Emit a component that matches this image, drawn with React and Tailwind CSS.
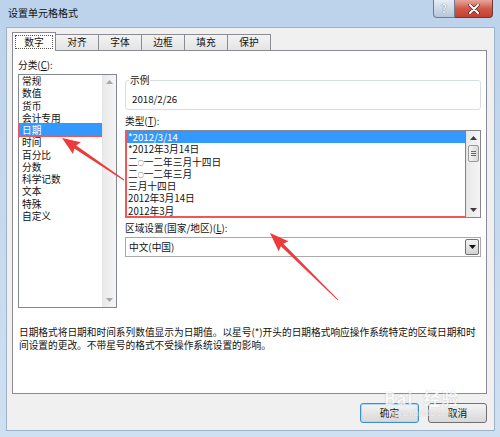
import React from 'react';

const tabs = ['数字', '对齐', '字体', '边框', '填充', '保护'];
const categories = ['常规', '数值', '货币', '会计专用', '日期', '时间', '百分比', '分数', '科学记数', '文本', '特殊', '自定义'];
const types = ['*2012/3/14', '*2012年3月14日', '二○一二年三月十四日', '二○一二年三月', '三月十四日', '2012年3月14日', '2012年3月'];

// the ○ in Excel's list is drawn small, so shrink it
const renderType = (t) =>
  t.split('○').flatMap((part, i) =>
    i === 0
      ? [part]
      : [
          <span key={i} className="inline-block w-[6px] text-center align-[1px] text-[6px]">
            ○
          </span>,
          part,
        ]
  );

// small triangle used on scrollbar and combo buttons
const Tri = ({ up, color = '#404040' }) => (
  <svg width="7" height="4" viewBox="0 0 7 4">
    <polygon points={up ? '0,4 7,4 3.5,0' : '0,0 7,0 3.5,4'} fill={color} />
  </svg>
);

const ScrollBar = ({ children, color }) => (
  <div className="flex w-[14px] flex-col border-l border-[#e4e4e4] bg-gradient-to-r from-[#e9e9e9] to-[#f5f5f5]">
    <div className="flex h-[14px] items-center justify-center">
      <Tri up color={color} />
    </div>
    <div className="flex-1">{children}</div>
    <div className="flex h-[14px] items-center justify-center">
      <Tri color={color} />
    </div>
  </div>
);

// red annotation arrow, tapered shaft from tail to tip
const Arrow = ({ tail, tip, head = 16, wing = 14, tailW = 1, neckW = 3.5 }) => {
  const dx = tip[0] - tail[0];
  const dy = tip[1] - tail[1];
  const len = Math.hypot(dx, dy);
  const ux = dx / len, uy = dy / len;
  const px = -uy, py = ux;
  const bx = tip[0] - ux * head, by = tip[1] - uy * head;
  const pts = [
    [tail[0] + (px * tailW) / 2, tail[1] + (py * tailW) / 2],
    [bx + (px * neckW) / 2, by + (py * neckW) / 2],
    [bx + (px * wing) / 2 - ux * 2, by + (py * wing) / 2 - uy * 2],
    tip,
    [bx - (px * wing) / 2 - ux * 2, by - (py * wing) / 2 - uy * 2],
    [bx - (px * neckW) / 2, by - (py * neckW) / 2],
    [tail[0] - (px * tailW) / 2, tail[1] - (py * tailW) / 2],
  ];
  return <polygon points={pts.map((p) => p.join(',')).join(' ')} fill="#ee3a3a" />;
};

const App = () => {
  return (
    <div className="relative h-[437px] w-[500px] overflow-hidden bg-gradient-to-b from-[#bcd3eb] to-[#cfe0f2] font-['Noto_Sans_CJK_SC',sans-serif] text-[9.7px] text-[#111]">
      {/* Title bar */}
      <div className="flex h-[27px] items-start">
        <div className="pl-[8px] pt-[6px] text-[10px] leading-[14px]">设置单元格格式</div>
        <div className="ml-auto mr-[7px] flex">
          <div className="flex h-[18px] w-[22px] items-center justify-center rounded-bl-[4px] border border-t-0 border-[#6b7d92] bg-gradient-to-b from-[#e6edf5] to-[#b6c6d8] text-[11px] font-bold leading-none text-[#f4f6f9] [text-shadow:0_0_1px_#3b4a5c]">
            ?
          </div>
          <div className="flex h-[18px] w-[38px] items-center justify-center rounded-br-[4px] border border-l-0 border-t-0 border-[#6b3a36] bg-gradient-to-b from-[#e7a69b] via-[#d0584a] to-[#c2402f]">
            <svg width="12" height="10" viewBox="0 0 12 10">
              <path d="M2 1 L10 9 M10 1 L2 9" stroke="#5a2620" strokeWidth="3.4" strokeLinecap="round" />
              <path d="M2 1 L10 9 M10 1 L2 9" stroke="#ffffff" strokeWidth="2" strokeLinecap="round" />
            </svg>
          </div>
        </div>
      </div>

      {/* Window body */}
      <div className="ml-[6px] flex h-[404px] w-[489px] flex-col border border-[#9fb2c8] bg-[#f0f0f0] px-[5px] pt-[4px]">
        {/* Tabs */}
        <div className="flex h-[18px] items-end">
          {tabs.map((t, i) =>
            i === 0 ? (
              <div key={t} className="relative z-10 -mb-px flex h-[19px] w-[44px] border border-b-0 border-[#898c95] bg-white p-[2px]">
                <div className="flex flex-1 items-center justify-center border border-dotted border-[#555]">{t}</div>
              </div>
            ) : (
              <div key={t} className="-ml-px flex h-[16px] w-[44px] items-center justify-center border border-b-0 border-[#898c95] bg-gradient-to-b from-[#f3f3f3] to-[#e4e4e4]">
                {t}
              </div>
            )
          )}
        </div>

        {/* Tab panel */}
        <div className="flex h-[344px] w-[475px] flex-col border border-[#898c95] bg-white pl-[5px] pt-[7px]">
          <div className="flex">
            {/* Category column */}
            <div className="flex w-[99px] flex-col">
              <div className="h-[14px] leading-[14px]">
                分类(<u>C</u>):
              </div>
              <div className="mt-[2px] flex h-[234px] border border-[#828790] bg-white">
                <div className="flex flex-1 flex-col">
                  {categories.map((c) => (
                    <div
                      key={c}
                      className={`h-[12.27px] pl-[3px] leading-[12.27px] ${
                        c === '日期' ? 'bg-[#3399ff] text-white outline outline-1 outline-[#f05656]' : ''
                      }`}
                    >
                      {c}
                    </div>
                  ))}
                </div>
                <ScrollBar color="#a8a8a8" />
              </div>
            </div>

            {/* Right column */}
            <div className="ml-[8px] flex w-[356px] flex-col pt-[15px]">
              <fieldset className="rounded-[3px] border border-[#d6dee5] px-[6px] pb-[3px] pt-[5px]">
                <legend className="ml-[-3px] px-[1px] leading-[14px]">示例</legend>
                <div className="h-[14px] leading-[14px]">2018/2/26</div>
              </fieldset>

              <div className="mt-[4px] h-[14px] leading-[14px]">
                类型(<u>T</u>):
              </div>
              <div className="mt-[2px] flex h-[88px] border border-[#828790] bg-white">
                <div className="flex flex-1 flex-col outline outline-1 -outline-offset-1 outline-[#f05656]">
                  {types.map((t, i) => (
                    <div key={t} className={`h-[12.27px] whitespace-nowrap pl-[2px] leading-[12.27px] ${i === 0 ? 'bg-[#3399ff] text-white' : ''}`}>
                      {renderType(t)}
                    </div>
                  ))}
                </div>
                <ScrollBar color="#3c3c3c">
                  <div className="mx-px flex h-[17px] flex-col items-center justify-center gap-px rounded-[2px] border border-[#9a9a9a] bg-gradient-to-r from-[#f4f4f4] to-[#d9d9d9]">
                    <div className="h-px w-[5px] bg-[#6a6a6a]" />
                    <div className="h-px w-[5px] bg-[#6a6a6a]" />
                    <div className="h-px w-[5px] bg-[#6a6a6a]" />
                  </div>
                </ScrollBar>
              </div>

              <div className="mt-[3px] h-[14px] leading-[14px]">
                区域设置(国家/地区)(<u>L</u>):
              </div>
              <div className="mt-[2px] flex h-[20px] items-center border border-[#a9a9a9] bg-white pl-[3px]">
                <span className="leading-[14px]">中文(中国)</span>
                <div className="ml-auto mr-px flex h-[16px] w-[14px] items-center justify-center rounded-[2px] border border-[#707070] bg-gradient-to-b from-[#f4f4f4] to-[#d3d3d3]">
                  <Tri color="#111" />
                </div>
              </div>
            </div>
          </div>

          <div className="mt-[18px] pl-[1px] leading-[13px]">
            日期格式将日期和时间系列数值显示为日期值。以星号(*)开头的日期格式响应操作系统特定的区域日期和时
            <br />
            间设置的更改。不带星号的格式不受操作系统设置的影响。
          </div>
        </div>

        {/* Buttons */}
        <div className="mt-[9px] flex justify-end gap-[9px] pr-[2px]">
          <button className="h-[20px] w-[59px] rounded-[3px] border border-[#3c8fd1] bg-gradient-to-b from-[#f4f4f4] to-[#d8d8d8] shadow-[inset_0_0_0_1px_#a9dbf6]">
            确定
          </button>
          <button className="h-[20px] w-[59px] rounded-[3px] border border-[#707070] bg-gradient-to-b from-[#f4f4f4] to-[#d8d8d8]">
            取消
          </button>
        </div>
      </div>

      {/* Baidu watermark */}
      <div className="pointer-events-none absolute left-[384px] top-[389px] flex flex-col items-start leading-none text-white opacity-70 [text-shadow:0_0_1px_#9a9a9a]">
        <span className="text-[17px] font-bold tracking-[1px]">Bai&nbsp;&nbsp;经验</span>
        <span className="mt-[3px] text-[8px]">jingyan.baidu.com</span>
      </div>

      {/* Red annotation arrows */}
      <svg className="pointer-events-none absolute left-0 top-0" width="500" height="437">
        <Arrow tail={[124, 180]} tip={[62, 138]} head={16} wing={14} />
        <Arrow tail={[338, 300]} tip={[270, 233]} head={17} wing={14} />
      </svg>
    </div>
  );
};

export default App;
